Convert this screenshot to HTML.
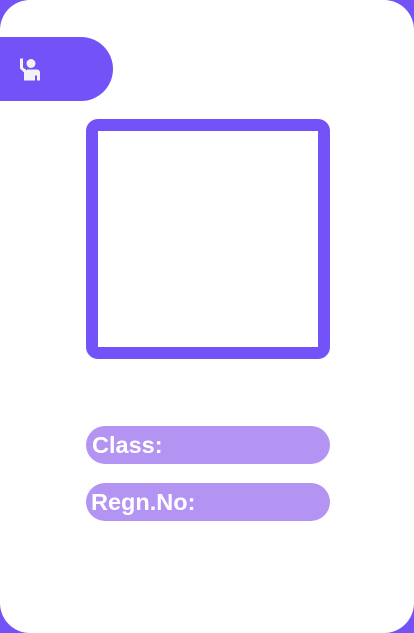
<!DOCTYPE html>
<html><head><style>
html,body{margin:0;padding:0;width:414px;height:633px;overflow:hidden;background:#7352f7;}
.card{position:absolute;left:0;top:0;width:414px;height:633px;background:#fff;border-radius:30px;}
.tab{position:absolute;left:0;top:37px;width:113px;height:64px;background:#7352f7;border-radius:0 32px 32px 0;}
.sq{position:absolute;left:86px;top:119px;width:220px;height:216px;border:12px solid #7352f7;border-radius:12px;}
.pill{position:absolute;left:86px;width:244px;height:38px;background:#b394f3;border-radius:19px;color:#fff;font:bold 23.5px "Liberation Sans",sans-serif;line-height:38px;box-sizing:border-box;padding-left:6px;}
</style></head><body>
<div class="card"></div>
<div class="tab">
<svg style="position:absolute;left:18px;top:19px" width="24" height="27" viewBox="0 0 24 26">
<path d="M2 2 L5 2 L5 11 L9 14 L9 24 L6 24 L6 16 L2 12 Z" fill="#f2f2f2"/>
<circle cx="13" cy="7" r="4.5" fill="#f2f2f2"/>
<path d="M9 13 H19 A3 3 0 0 1 22 16 V24 H19 V19 H17 V24 H9 Z" fill="#f2f2f2"/>
</svg>
</div>
<div class="sq"></div>
<div class="pill" style="top:426px">Class:</div>
<div class="pill" style="top:483px;padding-left:5px">Regn.No:</div>
</body></html>
